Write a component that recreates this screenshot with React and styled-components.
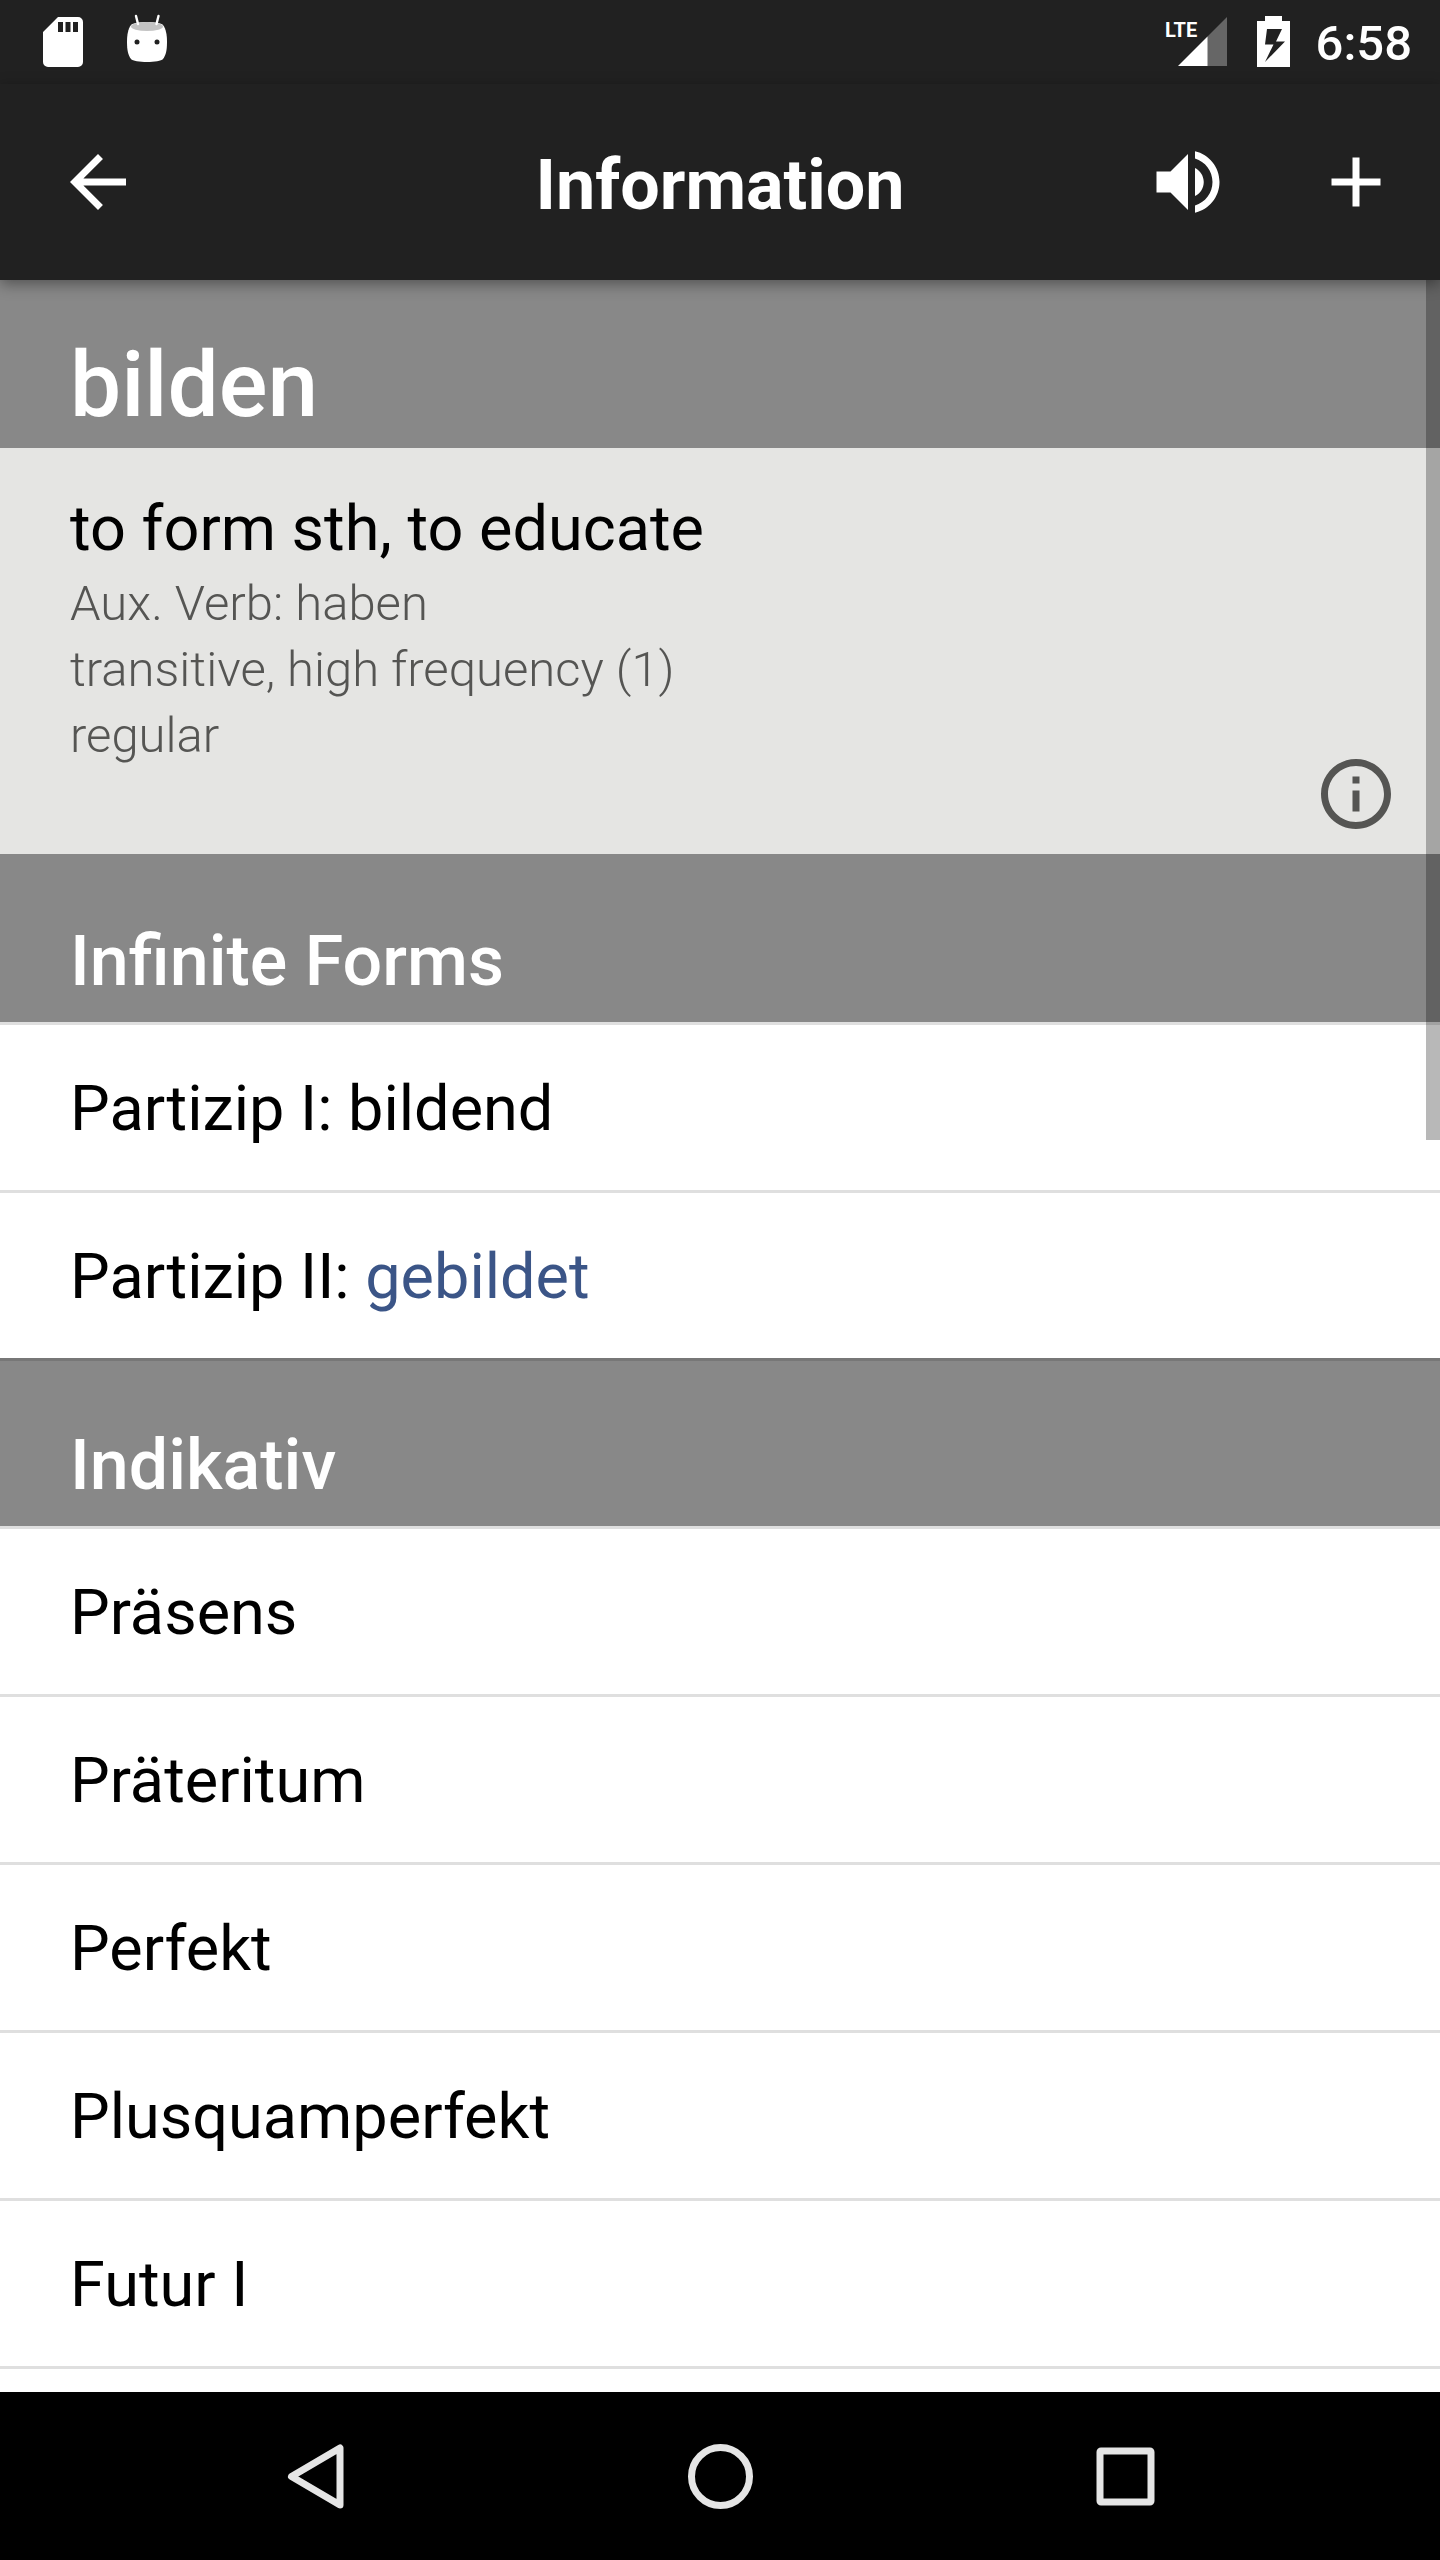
import styled, { createGlobalStyle } from "styled-components";

const entry = {
  word: "bilden",
  translation: "to form sth, to educate",
  details: [
    "Aux. Verb: haben",
    "transitive, high frequency (1)",
    "regular",
  ],
};

const tenses = ["Präsens", "Präteritum", "Perfekt", "Plusquamperfekt", "Futur I"];

export default function App() {
  return (
    <Screen>
      <GlobalStyle />
      <StatusBar>
        <StatusGroup gap={44}>
          <SdCardIcon />
          <MarshmallowIcon />
        </StatusGroup>
        <StatusGroup gap={26}>
          <SignalIcon />
          <BatteryIcon />
          <Clock>6:58</Clock>
        </StatusGroup>
      </StatusBar>

      <AppBar>
        <BarStart>
          <IconButton aria-label="Back">
            <MaterialIcon d="M20 11H7.83l5.59-5.59L12 4l-8 8 8 8 1.41-1.41L7.83 13H20v-2z" />
          </IconButton>
        </BarStart>
        <Title>Information</Title>
        <BarEnd>
          <IconButton aria-label="Play sound">
            <MaterialIcon d="M3 9v6h4l5 5V4L7 9H3zm13.5 3c0-1.77-1.02-3.29-2.5-4.03v8.05c1.48-.73 2.5-2.25 2.5-4.02zM14 3.23v2.06c2.89.86 5 3.54 5 6.71s-2.11 5.85-5 6.71v2.06c4.01-.91 7-4.49 7-8.77s-2.99-7.86-7-8.77z" />
          </IconButton>
          <IconButton aria-label="Add">
            <MaterialIcon d="M19 13h-6v6h-2v-6H5v-2h6V5h2v6h6v2z" />
          </IconButton>
        </BarEnd>
      </AppBar>

      <Content>
        <WordHeader>
          <h2>{entry.word}</h2>
        </WordHeader>
        <Summary>
          <SummaryText>
            <Translation>{entry.translation}</Translation>
            {entry.details.map((detail) => (
              <Detail key={detail}>{detail}</Detail>
            ))}
          </SummaryText>
          <IconButton aria-label="More information" color="#555553">
            <MaterialIcon d="M11 17h2v-6h-2v6zm1-15C6.48 2 2 6.48 2 12s4.48 10 10 10 10-4.48 10-10S17.52 2 12 2zm0 18c-4.41 0-8-3.59-8-8s3.59-8 8-8 8 3.59 8 8-3.59 8-8 8zM11 9h2V7h-2v2z" />
          </IconButton>
        </Summary>

        <SectionHeader>Infinite Forms</SectionHeader>
        <List>
          <Row>Partizip I: bildend</Row>
          <Row>
            Partizip II: <Highlight>gebildet</Highlight>
          </Row>
        </List>

        <SectionHeader divided>Indikativ</SectionHeader>
        <List last>
          {tenses.map((tense) => (
            <Row key={tense}>
              <RowButton>{tense}</RowButton>
            </Row>
          ))}
        </List>
        <ScrollThumb />
      </Content>

      <NavBar>
        <NavButton aria-label="Back">
          <svg width="72" height="72" viewBox="0 0 72 72">
            <path d="M61 8V65L12.500 36.500z" />
          </svg>
        </NavButton>
        <NavButton aria-label="Home">
          <svg width="72" height="72" viewBox="0 0 72 72">
            <circle cx="36.500" cy="36.500" r="29" />
          </svg>
        </NavButton>
        <NavButton aria-label="Recent apps">
          <svg width="72" height="72" viewBox="0 0 72 72">
            <rect x="11" y="11" width="51" height="51" rx="1" />
          </svg>
        </NavButton>
      </NavBar>
    </Screen>
  );
}

function MaterialIcon({ d }) {
  return (
    <svg width="84" height="84" viewBox="0 0 24 24" fill="currentColor">
      <path d={d} />
    </svg>
  );
}

function SdCardIcon() {
  return (
    <svg width="40" height="50" viewBox="0 0 40 50" fill="#ffffff">
      <path
        fillRule="evenodd"
        d="M15 0H35a5 5 0 0 1 5 5V45a5 5 0 0 1-5 5H5a5 5 0 0 1-5-5V15zM15 5v10h5V5zM22.500 5v10h5V5zM30 5v10h5V5z"
      />
    </svg>
  );
}

function MarshmallowIcon() {
  return (
    <svg width="40" height="56" viewBox="0 0 40 56">
      <path
        d="M4 11C7 7 33 7 36 11C39 15 40 21 40 28C40 36 39 41 36 45C33 49 7 49 4 45C1 41 0 36 0 28C0 21 1 15 4 11z"
        fill="#ffffff"
      />
      <ellipse cx="20" cy="12.500" rx="16" ry="4.500" fill="#c4c4c4" />
      <path
        d="M9 2l2 8M31.500 2l-2 8"
        stroke="#ffffff"
        strokeWidth="2.400"
        strokeLinecap="round"
      />
      <circle cx="10" cy="28" r="2.500" fill="#212121" />
      <circle cx="30" cy="28" r="2.500" fill="#212121" />
    </svg>
  );
}

function SignalIcon() {
  return (
    <svg width="64" height="50" viewBox="0 0 64 50">
      <path d="M44 20L64 0V49H44z" fill="#666666" />
      <path d="M15 49L44.500 19.500V49z" fill="#ffffff" />
      <NetworkLabel x="2" y="20">
        LTE
      </NetworkLabel>
    </svg>
  );
}

function BatteryIcon() {
  return (
    <svg width="37" height="52" viewBox="0 0 37 52">
      <path
        fillRule="evenodd"
        d="M12 0H29V5H37V51H4V5H12zM14 13L12 28.500H20.500L12 46L32 25.500H23L29 13z"
        fill="#ffffff"
      />
    </svg>
  );
}

const GlobalStyle = createGlobalStyle`
  * {
    box-sizing: border-box;
  }
  body {
    margin: 0;
    font-family: Roboto, "Liberation Sans", sans-serif;
  }
  h1, h2, p, ul {
    margin: 0;
    padding: 0;
  }
  button {
    padding: 0;
    border: none;
    background: none;
    font: inherit;
    color: inherit;
    cursor: pointer;
  }
  svg {
    display: block;
  }
`;

const Screen = styled.div`
  height: 100vh;
  display: flex;
  flex-direction: column;
  background-color: #ffffff;
`;

const StatusBar = styled.div`
  flex: none;
  height: 84px;
  padding: 0 28px 0 43px;
  display: flex;
  justify-content: space-between;
  align-items: center;
  background-color: #212121;
  color: #ffffff;
`;

const StatusGroup = styled.div`
  display: flex;
  align-items: center;
  gap: ${(props) => props.gap}px;
`;

const Clock = styled.span`
  padding-top: 4px;
  font-size: 49px;
  font-weight: 500;
  line-height: 58px;
`;

const NetworkLabel = styled.text`
  font-family: "Liberation Sans Narrow", Roboto, sans-serif;
  font-size: 20px;
  font-weight: 700;
  fill: #ffffff;
`;

const AppBar = styled.header`
  flex: none;
  height: 196px;
  display: grid;
  grid-template-columns: 1fr auto 1fr;
  align-items: center;
  background-color: #212121;
  color: #ffffff;
  box-shadow: 0 4px 14px rgba(0, 0, 0, 0.4);
  z-index: 1;
`;

const BarStart = styled.div`
  padding-left: 56px;
  display: flex;
`;

const BarEnd = styled.div`
  padding-right: 42px;
  display: flex;
  justify-content: flex-end;
  gap: 84px;
`;

const Title = styled.h1`
  padding-top: 5px;
  font-size: 70px;
  font-weight: 700;
  line-height: 82px;
`;

const IconButton = styled.button`
  flex: none;
  width: 84px;
  height: 84px;
  color: ${(props) => props.color || "#ffffff"};
`;

const Content = styled.main`
  flex: 1;
  min-height: 0;
  overflow: hidden;
  position: relative;
`;

const WordHeader = styled.div`
  height: 168px;
  padding: 0 70px 10px;
  display: flex;
  align-items: flex-end;
  background-color: #888888;
  color: #ffffff;
  h2 {
    font-size: 91px;
    font-weight: 500;
    line-height: 106px;
  }
`;

const Summary = styled.section`
  padding: 42px 42px 18px 70px;
  display: flex;
  justify-content: space-between;
  align-items: flex-end;
  background-color: #e5e5e3;
`;

const SummaryText = styled.div`
  padding-bottom: 67px;
`;

const Translation = styled.p`
  padding-bottom: 3px;
  font-size: 63px;
  line-height: 78px;
  color: #000000;
`;

const Detail = styled.p`
  font-size: 49px;
  font-weight: 300;
  line-height: 66px;
  color: #555553;
`;

const SectionHeader = styled.h2`
  height: 168px;
  padding: 0 70px 20px;
  display: flex;
  align-items: flex-end;
  border-top: ${(props) => props.divided && "3px solid #777777"};
  background-color: #888888;
  color: #ffffff;
  font-size: 70px;
  font-weight: 500;
  line-height: 82px;
`;

const List = styled.ul`
  list-style: none;
  border-bottom: ${(props) => props.last && "3px solid #dfdfdf"};
`;

const Row = styled.li`
  height: 168px;
  padding: 0 70px;
  border-top: 3px solid #dfdfdf;
  font-size: 63px;
  line-height: 167px;
  color: #000000;
`;

const RowButton = styled.button`
  display: block;
  width: 100%;
  text-align: left;
`;

const Highlight = styled.span`
  color: #3b5587;
`;

const ScrollThumb = styled.div`
  position: absolute;
  top: 0;
  right: 0;
  width: 14px;
  height: 860px;
  background-color: rgba(0, 0, 0, 0.28);
`;

const NavBar = styled.nav`
  flex: none;
  height: 168px;
  padding: 0 112px;
  display: grid;
  grid-template-columns: repeat(3, 1fr);
  background-color: #000000;
`;

const NavButton = styled.button`
  display: flex;
  justify-content: center;
  align-items: center;
  svg {
    fill: none;
    stroke: #e5e5e5;
    stroke-width: 7px;
    stroke-linejoin: round;
  }
`;
